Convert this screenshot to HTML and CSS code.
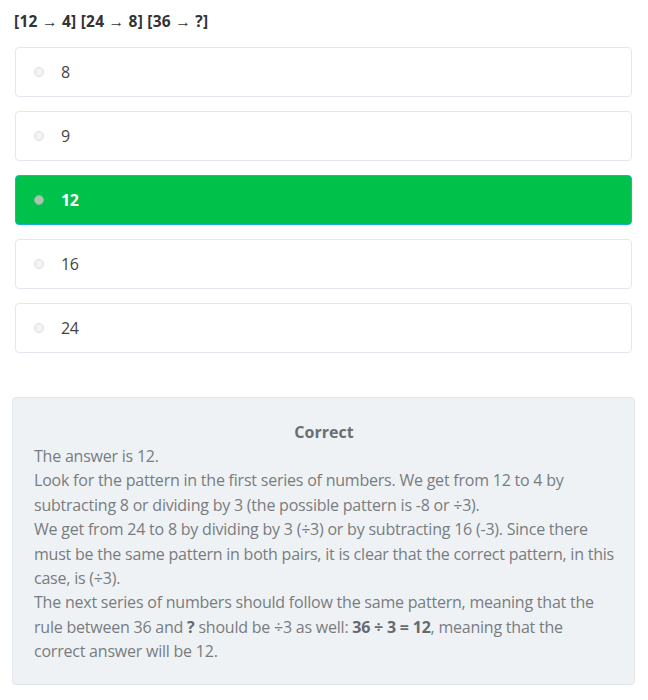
FILE: index.html
```html
<!DOCTYPE html>
<html>
<head>
<meta charset="utf-8">
<link rel="stylesheet" href="styles.css">
</head>
<body>
<div class="page">
  <div class="question">[12 → 4] [24 → 8] [36 → ?]</div>
  <div class="options">
    <div class="option"><span class="radio"></span><span class="label">8</span></div>
    <div class="option"><span class="radio"></span><span class="label">9</span></div>
    <div class="option selected"><span class="radio"></span><span class="label">12</span></div>
    <div class="option"><span class="radio"></span><span class="label">16</span></div>
    <div class="option"><span class="radio"></span><span class="label">24</span></div>
  </div>
  <div class="feedback">
    <div class="fb-title">Correct</div>
    <div class="fb-text">
      The answer is 12.<br>
      Look for the pattern in the first series of numbers. We get from 12 to 4 by subtracting 8 or dividing by 3 (the possible pattern is -8 or ÷3).<br>
      We get from 24 to 8 by dividing by 3 (÷3) or by subtracting 16 (-3). Since there must be the same pattern in both pairs, it is clear that the correct pattern, in this case, is (÷3).<br>
      The next series of numbers should follow the same pattern, meaning that the rule between 36 and <b>?</b> should be ÷3 as well: <b>36 ÷ 3 = 12</b>, meaning that the correct answer will be 12.
    </div>
  </div>
</div>
</body>
</html>
```
FILE: styles.css
```css
html, body {
  margin: 0;
  padding: 0;
  background: #ffffff;
}
.page {
  font-family: "Open Sans", "Noto Sans", sans-serif;
  padding: 9px 14px 0 14px;
  color: #333;
}
.question {
  font-weight: 700;
  font-size: 15.5px;
  color: #333;
  line-height: 24px;
  letter-spacing: 0.25px;
}
.options {
  display: flex;
  flex-direction: column;
  gap: 14px;
  margin-top: 14px;
  padding: 0 2px 0 1px;
}
.option {
  height: 48px;
  border: 1px solid #e3e8ee;
  border-radius: 4px;
  display: flex;
  align-items: center;
  padding-left: 18px;
  background: #fff;
}
.radio {
  width: 8px;
  height: 8px;
  border-radius: 50%;
  border: 1px solid #dcdcdc;
  background: #f4f4f4;
  flex: none;
}
.label {
  margin-left: 17px;
  font-size: 16px;
  color: #444;
  letter-spacing: -0.3px;
}
.option.selected {
  background: #00c14a;
  border-color: #1ab0d8;
}
.option.selected .radio {
  background: #a8c8b0;
  border-color: #8fb79a;
}
.option.selected .label {
  color: #fff;
  font-weight: 700;
}
.feedback {
  margin: 44px 0 0 -2px;
  background: #eff2f5;
  border: 1px solid #e2e6ea;
  border-radius: 4px;
  padding: 22px 20px 20px 21px;
  width: 580px;
}
.fb-title {
  text-align: center;
  font-weight: 700;
  font-size: 16px;
  color: #6a6e73;
  line-height: 24px;
}
.fb-text {
  font-size: 16px;
  line-height: 24.4px;
  color: #787c80;
  letter-spacing: -0.22px;
}
.fb-text b {
  color: #666a6e;
}
```
